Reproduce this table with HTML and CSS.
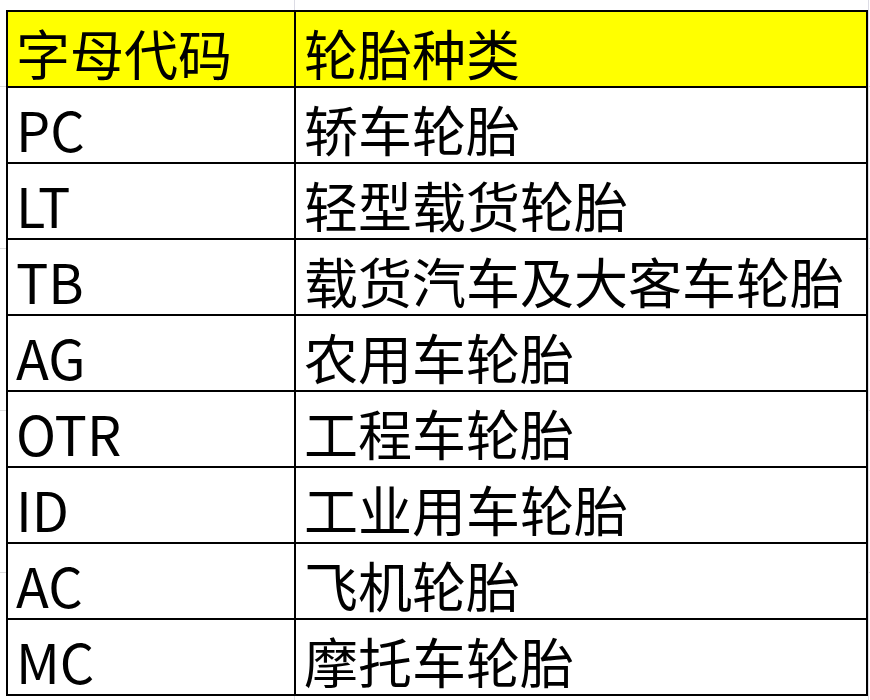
FILE: index.html
```html
<!DOCTYPE html>
<html lang="zh-CN">
<head>
<meta charset="utf-8">
<title>轮胎种类</title>
<link rel="stylesheet" href="styles.css">
</head>
<body>
<div class="sheet">
<table class="grid">
<colgroup><col class="c1"><col class="c2"></colgroup>
<thead>
<tr class="head"><th>字母代码</th><th>轮胎种类</th></tr>
</thead>
<tbody>
<tr><td>PC</td><td>轿车轮胎</td></tr>
<tr><td>LT</td><td>轻型载货轮胎</td></tr>
<tr><td>TB</td><td>载货汽车及大客车轮胎</td></tr>
<tr><td>AG</td><td>农用车轮胎</td></tr>
<tr><td>OTR</td><td>工程车轮胎</td></tr>
<tr><td>ID</td><td>工业用车轮胎</td></tr>
<tr><td>AC</td><td>飞机轮胎</td></tr>
<tr><td>MC</td><td>摩托车轮胎</td></tr>
</tbody>
</table>
</div>
</body>
</html>
```
FILE: styles.css
```css
html, body {
  margin: 0;
  padding: 0;
  background: #ffffff;
}
body {
  width: 870px;
  height: 700px;
  overflow: hidden;
  background-image:
    linear-gradient(to right, transparent 294px, #dcdce4 294px, #dcdce4 295px, transparent 295px),
    linear-gradient(to right, transparent 868px, #dcdce4 868px, #dcdce4 869px, transparent 869px),
    repeating-linear-gradient(to bottom, transparent 0, transparent 86px, #dcdcdc 86px, #dcdcdc 87px, transparent 87px, transparent 162px);
  font-family: "Noto Sans CJK SC", "Noto Sans", sans-serif;
}
.sheet {
  padding: 10px 0 0 6px;
}
.grid {
  border-collapse: collapse;
  table-layout: fixed;
  width: 862px;
  background: #ffffff;
}
.c1 { width: 288px; }
.c2 { width: 572px; }
.grid th,
.grid td {
  border: 2px solid #000000;
  height: 76px;
  padding: 8px 0 0 8px;
  box-sizing: border-box;
  font-size: 54px;
  font-weight: 400;
  line-height: 66px;
  text-align: left;
  vertical-align: middle;
  color: #000000;
  white-space: nowrap;
}
.head th {
  background: #ffff00;
}
```
